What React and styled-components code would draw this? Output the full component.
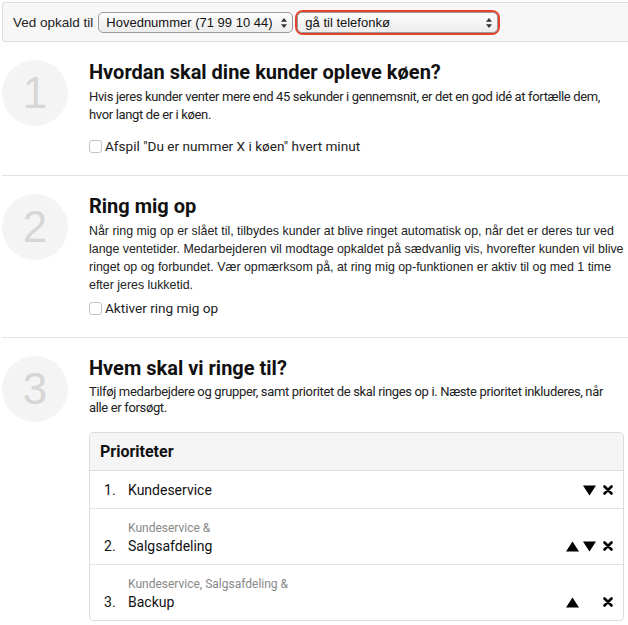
import React from "react"
import styled, { createGlobalStyle } from "styled-components"

const Global = createGlobalStyle`
  body {
    margin: 0;
    background: #fff;
    font-family: Roboto, "Liberation Sans", sans-serif;
    color: #111;
  }
`

const Page = styled.div`
  padding: 2px 0 0 2px;
`

const TopBar = styled.div`
  display: flex;
  align-items: center;
  gap: 4px;
  height: 38px;
  padding: 0 10px;
  background: #f7f7f7;
  border: 1px solid #dedede;
  border-right: none;
  border-radius: 3px 0 0 3px;
  font-family: "Liberation Sans", sans-serif;
  font-size: 13.5px;
  color: #222;
`

const SelectWrap = styled.div`
  position: relative;
  display: inline-flex;
  width: ${p => p.w}px;
  height: 21px;
  margin-left: ${p => p.ml || 0}px;
  border-radius: 6px;
  box-shadow: ${p => (p.focus ? "0 0 0 2px #e5402a" : "none")};
`

const Select = styled.select`
  appearance: none;
  width: 100%;
  height: 100%;
  padding: 0 14px 0 7px;
  border: 1px solid #9b9b9b;
  border-radius: 5px;
  background: linear-gradient(#fdfdfd, #ececec);
  font-family: "Liberation Sans", sans-serif;
  font-size: 13px;
  color: #111;
  outline: none;
`

const Arrows = styled.svg`
  position: absolute;
  right: 6px;
  top: 6px;
  pointer-events: none;
`

const Section = styled.section`
  display: flex;
  gap: 21px;
  padding: ${p => p.pad || "18px 0 20px 0"};
  border-bottom: ${p => (p.last ? "none" : "1px solid #e2e2e2")};
`

const Circle = styled.div`
  flex: none;
  width: 66px;
  height: 66px;
  border-radius: 50%;
  background: #f4f4f4;
  display: flex;
  align-items: center;
  justify-content: center;
  font-family: "Liberation Sans", sans-serif;
  font-size: 44px;
  color: #d6d6d6;
`

const Body = styled.div`
  flex: 1;
  padding-right: 4px;
`

const Heading = styled.h2`
  margin: 0;
  font-size: 20px;
  line-height: 24px;
  font-weight: 700;
`

const Text = styled.p`
  margin: 4px 0 0 0;
  font-family: ${p => p.font || "Roboto, sans-serif"};
  font-size: ${p => p.size || 13}px;
  line-height: ${p => p.lh || 18}px;
  letter-spacing: ${p => p.ls || 0}px;
  color: #222;
`

const CheckRow = styled.label`
  display: flex;
  align-items: center;
  gap: 3px;
  margin-top: ${p => p.mt || 13}px;
  font-size: 13.6px;
  line-height: 18px;
  color: #222;
`

const Box = styled.span`
  width: 11px;
  height: 11px;
  border: 1px solid #c4c4c4;
  border-radius: 3px;
  background: #fff;
`

const Panel = styled.div`
  margin-top: 16px;
  border: 1px solid #dcdcdc;
  border-radius: 4px;
  overflow: hidden;
`

const PanelHead = styled.div`
  height: 37px;
  padding: 0 10px;
  display: flex;
  align-items: center;
  background: #f5f5f5;
  border-bottom: 1px solid #dcdcdc;
  font-size: 16px;
  font-weight: 700;
`

const Row = styled.div`
  display: flex;
  align-items: flex-end;
  padding: 10px 10px 9px 14px;
  border-top: ${p => (p.first ? "none" : "1px solid #e2e2e2")};
  font-size: 14px;
  line-height: 18px;
`

const Num = styled.span`
  width: 24px;
  flex: none;
`

const Names = styled.div`
  flex: 1;
  display: flex;
  flex-direction: column;
`

const Sub = styled.span`
  font-size: 12px;
  line-height: 18px;
  color: #888;
`

const Actions = styled.div`
  display: flex;
  align-items: center;
  height: 18px;
`

const Slot = styled.span`
  width: ${p => p.w || 13}px;
  margin-left: ${p => p.ml || 0}px;
  display: flex;
  justify-content: center;
`

const Up = () => (
  <svg width="13" height="11" viewBox="0 0 13 11"><path d="M6.5 0.5 L13 10.5 L0 10.5 Z" fill="#000" /></svg>
)
const Down = () => (
  <svg width="13" height="11" viewBox="0 0 13 11"><path d="M0 0.5 L13 0.5 L6.5 10.5 Z" fill="#000" /></svg>
)
const Cross = () => (
  <svg width="10" height="10" viewBox="0 0 10 10"><path d="M1.5 1.5 L8.5 8.5 M8.5 1.5 L1.5 8.5" stroke="#000" strokeWidth="2.6" strokeLinecap="round" /></svg>
)

const Arrow = () => (
  <Arrows width="6" height="10" viewBox="0 0 6 10">
    <path d="M3 0 L6 3.8 L0 3.8 Z M0 6.2 L6 6.2 L3 10 Z" fill="#333" />
  </Arrows>
)

const rows = [
  { n: 1, name: "Kundeservice", up: false, down: true },
  { n: 2, sub: "Kundeservice &", name: "Salgsafdeling", up: true, down: true },
  { n: 3, sub: "Kundeservice, Salgsafdeling &", name: "Backup", up: true, down: false },
]

export default function App() {
  return (
    <Page>
      <Global />
      <TopBar>
        <span>Ved opkald til</span>
        <SelectWrap w={195} ml={1}>
          <Select defaultValue="a">
            <option value="a">Hovednummer (71 99 10 44)</option>
          </Select>
          <Arrow />
        </SelectWrap>
        <SelectWrap w={201} ml={0} focus>
          <Select defaultValue="a">
            <option value="a">gå til telefonkø</option>
          </Select>
          <Arrow />
        </SelectWrap>
      </TopBar>

      <Section>
        <Circle>1</Circle>
        <Body>
          <Heading>Hvordan skal dine kunder opleve køen?</Heading>
          <Text ls={-0.35}>
            Hvis jeres kunder venter mere end 45 sekunder i gennemsnit, er det en god idé at fortælle dem,
            hvor langt de er i køen.
          </Text>
          <CheckRow mt={13}>
            <Box />
            Afspil "Du er nummer X i køen" hvert minut
          </CheckRow>
        </Body>
      </Section>

      <Section>
        <Circle>2</Circle>
        <Body>
          <Heading>Ring mig op</Heading>
          <Text font={'"Liberation Sans", sans-serif'} size={12.4}>
            Når ring mig op er slået til, tilbydes kunder at blive ringet automatisk op, når det er deres tur ved
            lange ventetider. Medarbejderen vil modtage opkaldet på sædvanlig vis, hvorefter kunden vil blive
            ringet op og forbundet. Vær opmærksom på, at ring mig op-funktionen er aktiv til og med 1 time
            efter jeres lukketid.
          </Text>
          <CheckRow mt={5}>
            <Box />
            Aktiver ring mig op
          </CheckRow>
        </Body>
      </Section>

      <Section last pad="18px 0 0 0">
        <Circle>3</Circle>
        <Body>
          <Heading>Hvem skal vi ringe til?</Heading>
          <Text lh={16} ls={-0.35}>
            Tilføj medarbejdere og grupper, samt prioritet de skal ringes op i. Næste prioritet inkluderes, når
            alle er forsøgt.
          </Text>
          <Panel>
            <PanelHead>Prioriteter</PanelHead>
            {rows.map((r, i) => (
              <Row key={r.n} first={i === 0}>
                <Num>{r.n}.</Num>
                <Names>
                  {r.sub && <Sub>{r.sub}</Sub>}
                  <span>{r.name}</span>
                </Names>
                <Actions>
                  <Slot>{r.up && <Up />}</Slot>
                  <Slot ml={4}>{r.down && <Down />}</Slot>
                  <Slot w={10} ml={7}><Cross /></Slot>
                </Actions>
              </Row>
            ))}
          </Panel>
        </Body>
      </Section>
    </Page>
  )
}
